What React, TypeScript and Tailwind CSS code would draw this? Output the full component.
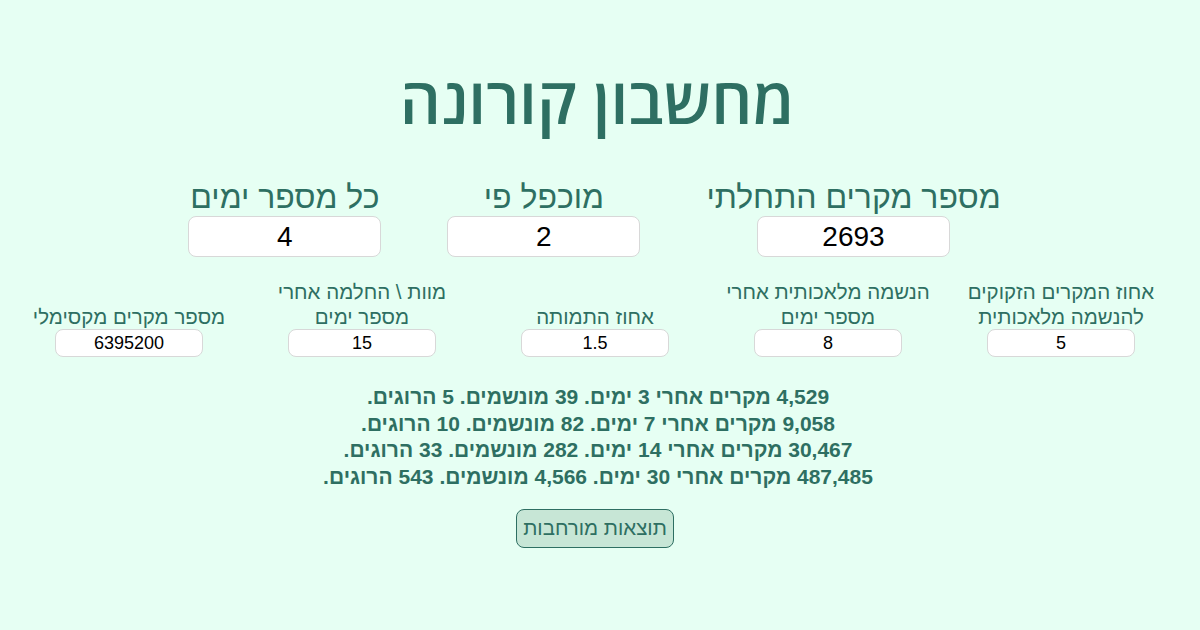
import React from "react"

type Field = { label: string; value: string }

const mainFields: Field[] = [
  { label: "מספר מקרים התחלתי", value: "2693" },
  { label: "מוכפל פי", value: "2" },
  { label: "כל מספר ימים", value: "4" },
]

const extraFields: Field[] = [
  { label: "אחוז המקרים הזקוקים להנשמה מלאכותית", value: "5" },
  { label: "הנשמה מלאכותית אחרי מספר ימים", value: "8" },
  { label: "אחוז התמותה", value: "1.5" },
  { label: "מוות \\ החלמה אחרי מספר ימים", value: "15" },
  { label: "מספר מקרים מקסימלי", value: "6395200" },
]

const results = [
  "4,529 מקרים אחרי 3 ימים. 39 מונשמים. 5 הרוגים.",
  "9,058 מקרים אחרי 7 ימים. 82 מונשמים. 10 הרוגים.",
  "30,467 מקרים אחרי 14 ימים. 282 מונשמים. 33 הרוגים.",
  "487,485 מקרים אחרי 30 ימים. 4,566 מונשמים. 543 הרוגים.",
]

const App: React.FC = () => {
  return (
    <div
      dir="rtl"
      className="w-[1200px] h-[630px] bg-[#e6fff3] text-[#2e6f62] flex flex-col items-center font-['Liberation_Sans',sans-serif]"
    >
      <h1 className="mt-[52px] mr-[6px] text-[64px] leading-[96px] font-semibold font-['Open_Sans','Liberation_Sans',sans-serif]">
        מחשבון קורונה
      </h1>

      <div className="mt-[30px] flex items-end gap-[66px] mr-[11px]">
        {mainFields.map((f) => (
          <div key={f.label} className="flex flex-col items-center">
            <span className="text-[32px] leading-[38px] whitespace-nowrap">{f.label}</span>
            <input
              readOnly
              value={f.value}
              className="w-[193px] h-[41px] bg-white border border-[#d8d8d8] rounded-lg text-center text-[28px] text-black outline-none"
            />
          </div>
        ))}
      </div>

      <div className="mt-[22px] mr-[10px] flex items-end gap-[22px]">
        {extraFields.map((f) => (
          <div key={f.label} className="w-[211px] flex flex-col items-center">
            <span className="text-[20.5px] leading-[25px] text-center">{f.label}</span>
            <input
              readOnly
              value={f.value}
              className="w-[148px] h-[28px] bg-white border border-[#d8d8d8] rounded-lg text-center text-[18px] text-black outline-none"
            />
          </div>
        ))}
      </div>

      <div className="mt-[27px] mr-[4px] flex flex-col items-center font-bold text-[21px] leading-[26.5px]">
        {results.map((r) => (
          <p key={r}>{r}</p>
        ))}
      </div>

      <button className="mt-[19px] mr-[10px] h-[39px] px-[6px] bg-[#c7e6d6] border border-[#2e6f62] rounded-lg text-[20.5px] text-[#2e6f62]">
        תוצאות מורחבות
      </button>
    </div>
  )
}

export default App
